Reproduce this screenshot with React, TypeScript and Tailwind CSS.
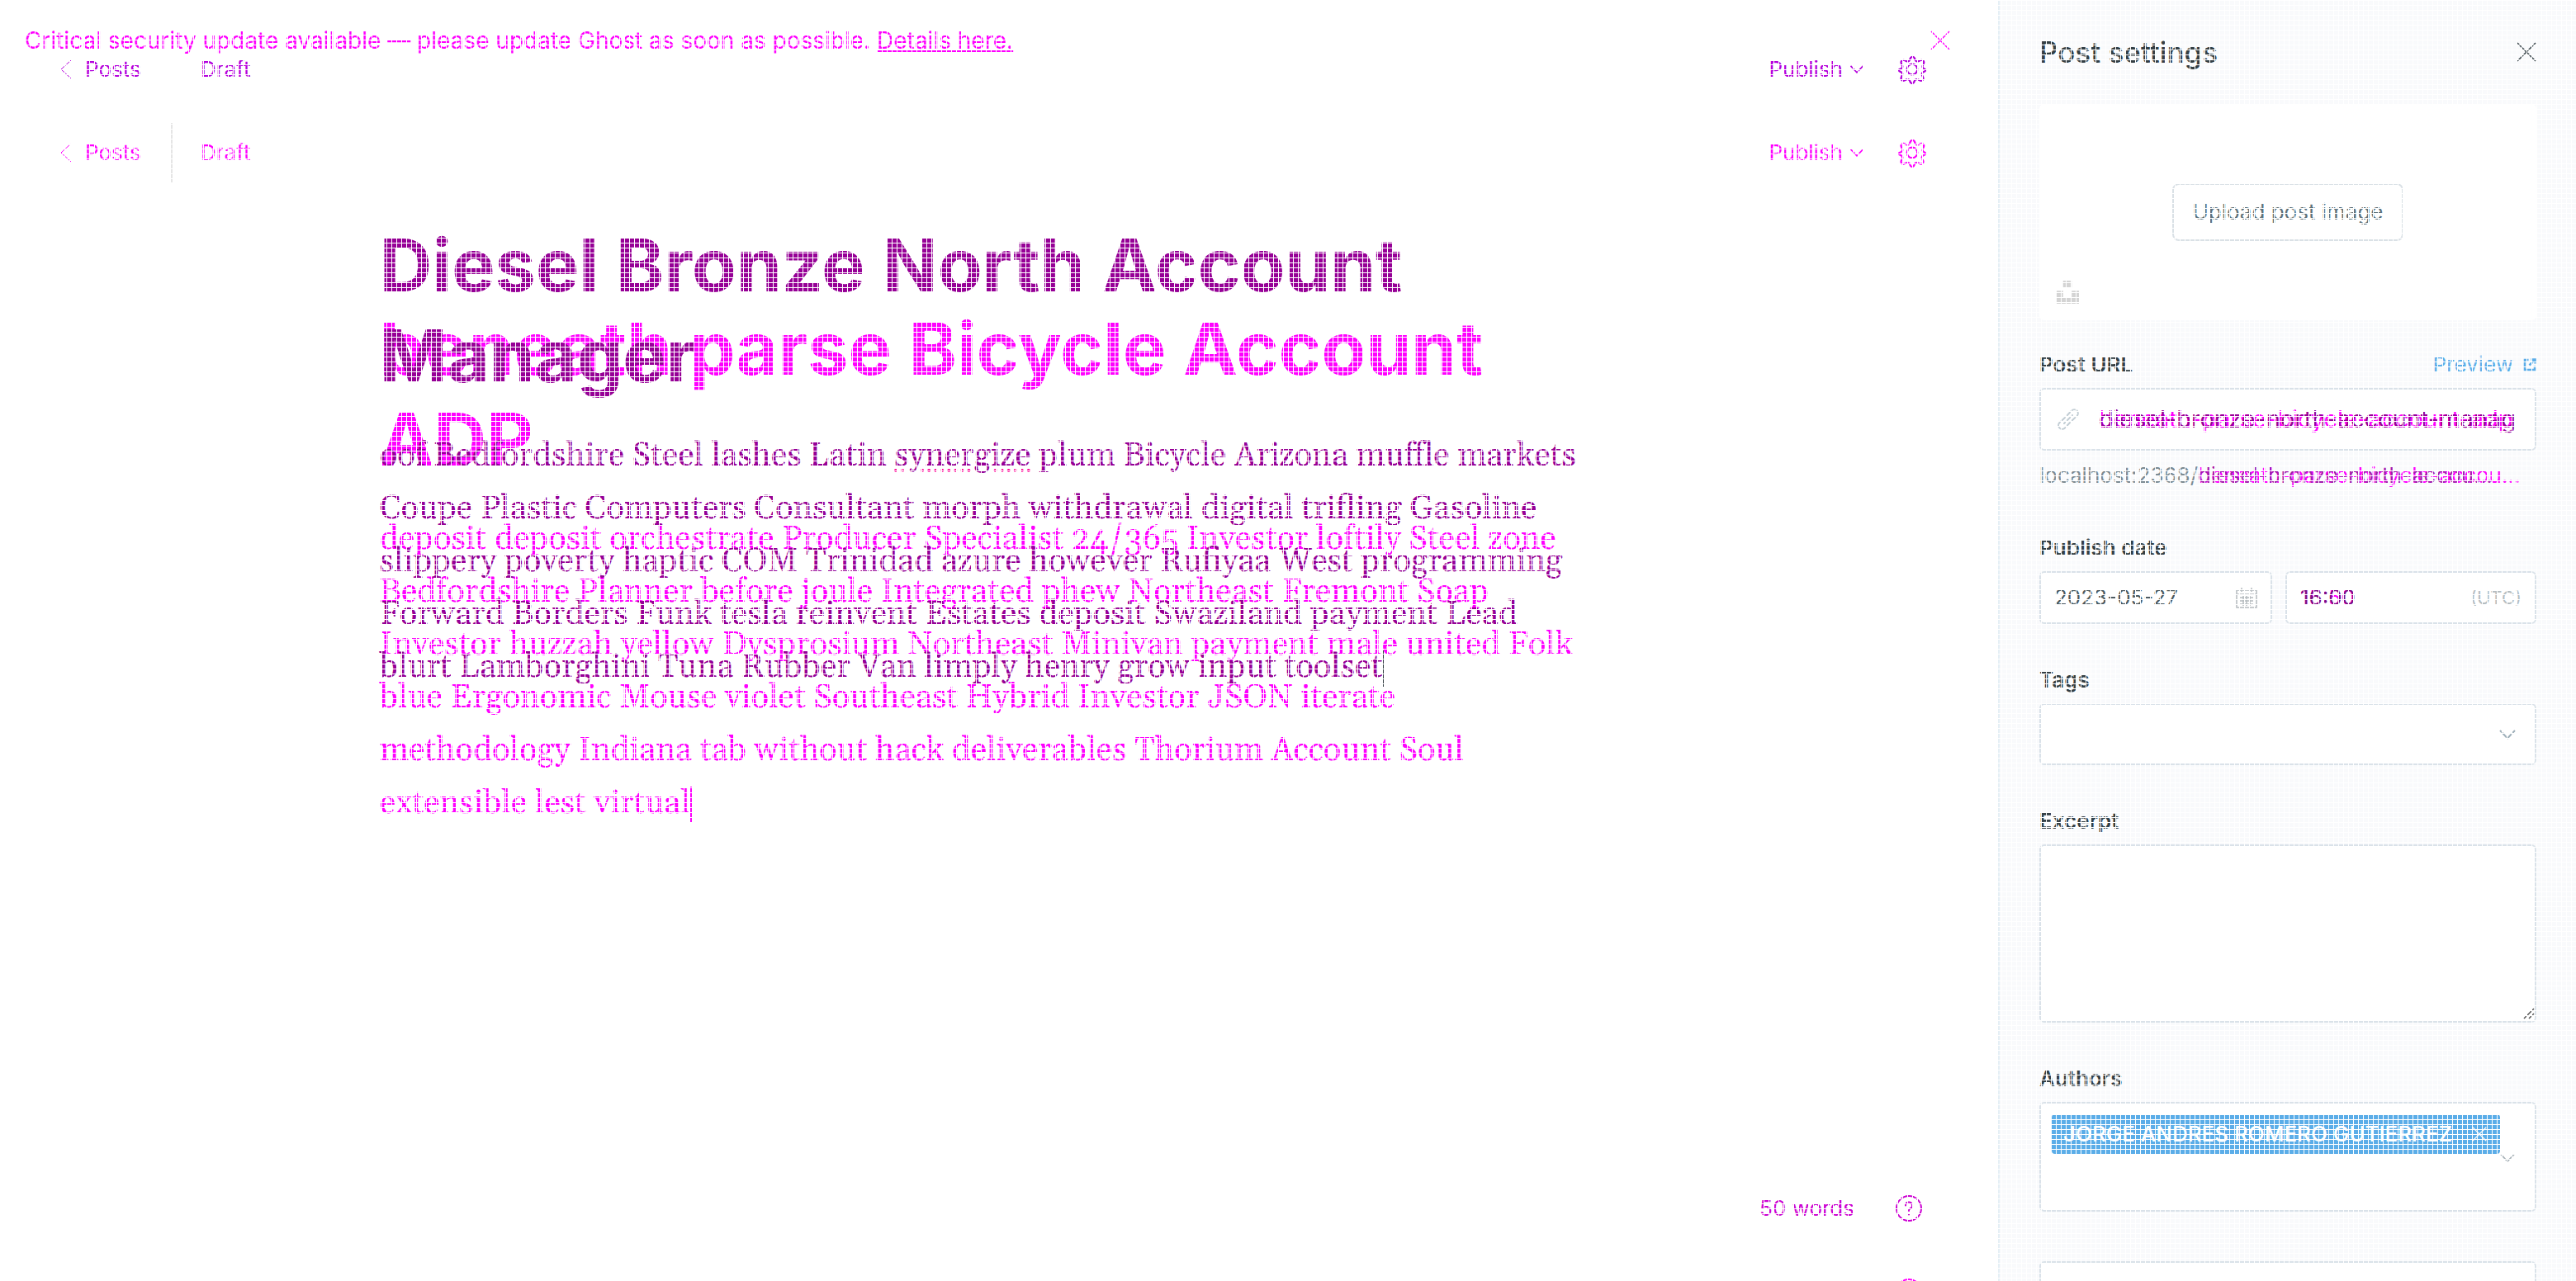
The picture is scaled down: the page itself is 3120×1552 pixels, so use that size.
import React, { useId } from "react";

type Tone = "before" | "after";

const tones = {
  before: { text: "text-[#960096]", ui: "text-[#b400dc]", rule: "border-transparent" },
  after: { text: "text-[#ff00ff]", ui: "text-[#ff00ff]", rule: "border-[#e5e5e5]" },
};

function Cross({ className }: { className: string }) {
  return (
    <svg viewBox="0 0 24 24" fill="none" stroke="currentColor" strokeWidth="1.500" className={className} aria-hidden="true">
      <path d="M1 1l22 22M23 1L1 23" />
    </svg>
  );
}

function Chevron({ className }: { className: string }) {
  return (
    <svg viewBox="0 0 20 12" fill="none" stroke="currentColor" strokeWidth="2" className={className} aria-hidden="true">
      <path d="M1 1l9 9.500 9-9.500" />
    </svg>
  );
}

function Gear() {
  return (
    <svg viewBox="0 0 24 24" fill="none" stroke="currentColor" strokeWidth="1.500" strokeLinejoin="round" className="size-9" aria-hidden="true">
      <circle cx="12" cy="12" r="4.200" />
      <path d="M13.800 2.700l.7 1.800a1.900 1.900 0 0 0 2.500 1l1.800-.8a1.900 1.900 0 0 1 2.500 2.500l-.8 1.800a1.900 1.900 0 0 0 1 2.500l.9.5a1.500 1.500 0 0 1 0 1.500l-1.400.7a1.900 1.900 0 0 0-1 2.500l.8 1.800a1.900 1.900 0 0 1-2.500 2.500l-1.800-.8a1.900 1.900 0 0 0-2.500 1l-.7 1.500a1.900 1.900 0 0 1-2.600 0l-.7-1.500a1.900 1.900 0 0 0-2.500-1l-1.800.8a1.900 1.900 0 0 1-2.500-2.500l.8-1.800a1.900 1.900 0 0 0-1-2.500l-1.400-.7a1.500 1.500 0 0 1 0-1.500l1.400-.5a1.900 1.900 0 0 0 1-2.500l-.8-1.800a1.900 1.900 0 0 1 2.500-2.500l1.800.8a1.900 1.900 0 0 0 2.500-1l.7-1.800a1.900 1.900 0 0 1 3.100 0z" />
    </svg>
  );
}

function Help() {
  return (
    <svg viewBox="0 0 32 32" fill="none" stroke="currentColor" strokeWidth="2" strokeLinecap="round" className="size-8" aria-hidden="true">
      <circle cx="16" cy="16" r="15" />
      <path d="M12 12.500a4 4 0 1 1 5.500 3.700c-1 .4-1.500 1-1.500 2.300v.5M16 23v.5" />
    </svg>
  );
}

type EditorProps = {
  tone: Tone;
  title: string[];
  lines: React.ReactNode[];
  caret: string;
};

function Editor({ tone, title, lines, caret }: EditorProps) {
  const t = tones[tone];
  return (
    <section className="flex h-screen shrink-0 flex-col">
      <header className={`flex h-[168px] shrink-0 items-center pl-[73px] pr-[86px] text-[26px] leading-8 ${t.ui}`}>
        <a href="#posts" className="flex w-[134px] items-center gap-4">
          <svg viewBox="0 0 14 24" fill="none" stroke="currentColor" strokeWidth="1" className="h-6 w-3.5" aria-hidden="true">
            <path d="M13 1L1 12l12 11" />
          </svg>
          Posts
        </a>
        <span className={`flex h-[72px] items-center border-l-2 pl-[34px] ${t.rule}`}>Draft</span>
        <div className="ml-auto flex items-center">
          <button type="button" className="flex items-center gap-2">
            Publish
            <Chevron className="h-2.5 w-[18px]" />
          </button>
          <button type="button" aria-label="Settings" className="ml-10">
            <Gear />
          </button>
        </div>
      </header>
      <article className={`mx-auto mt-[98px] w-[62%] whitespace-nowrap ${t.text}`}>
        <h1 className="text-[88px] font-bold leading-[110px]">
          {title.map((line) => (
            <span key={line} className="block">{line}</span>
          ))}
        </h1>
        <p className="mt-[35px] font-['Gelasio','Liberation_Serif',serif] text-[40px] leading-16">
          {lines.map((line, i) => (
            <span key={i} className="block">
              {line}
              {i === lines.length - 1 && <span className={`inline-block h-11 w-0.5 align-middle ${caret}`} />}
            </span>
          ))}
        </p>
      </article>
      <footer className={`mt-auto flex items-center justify-end gap-[50px] pb-[72px] pr-[92px] text-[26px] leading-8 ${tone === "before" ? "text-[#cc00d2]" : "text-[#ff00ff]"}`}>
        <span>50 words</span>
        <button type="button" aria-label="Help"><Help /></button>
      </footer>
    </section>
  );
}

const box = "rounded-md border-2 border-[#dae2e9] bg-white";

function Label({ htmlFor, children }: { htmlFor?: string; children: React.ReactNode }) {
  return (
    <label htmlFor={htmlFor} className="text-[26px] font-semibold leading-8 text-[#343f44]">{children}</label>
  );
}

function Sidebar() {
  const id = useId();
  return (
    <aside className="flex h-screen w-[700px] shrink-0 flex-col overflow-hidden border-l-2 border-[#e5eff5] bg-[#f9fafc] px-12">
      <header className="flex h-[126px] shrink-0 items-center justify-between text-[#343f44]">
        <h2 className="text-[35px] font-medium leading-10">Post settings</h2>
        <button type="button" aria-label="Close settings"><Cross className="size-6" /></button>
      </header>
      <div className="relative flex h-[262px] shrink-0 items-center justify-center rounded-md bg-white">
        <button type="button" className="h-[70px] rounded-lg border-2 border-[#dae1e6] bg-white px-[22px] text-[26px] leading-8 text-[#5d7179]">
          Upload post image
        </button>
        <svg viewBox="0 0 24 24" fill="#d4d4d4" className="absolute bottom-5 left-5 size-7" aria-hidden="true">
          <path d="M7.500 6.750V0h9v6.750h-9zm9 3.750H24V24H0V10.500h7.500v6.750h9V10.500z" />
        </svg>
      </div>
      <form className="mt-[38px] flex flex-col gap-[52px]">
        <div>
          <div className="mb-3 flex items-center justify-between">
            <Label htmlFor={`${id}-url`}>Post URL</Label>
            <a href="#preview" className="flex items-center gap-3 text-[26px] leading-8 text-[#5bade8]">
              Preview
              <svg viewBox="0 0 16 16" fill="none" stroke="currentColor" strokeWidth="2.500" className="size-4" aria-hidden="true">
                <path d="M6.500 2H2v12h12V9.500M9.500 1.500h5v5M14 2L7.500 8.500" />
              </svg>
            </a>
          </div>
          <div className={`relative flex h-[76px] items-center overflow-hidden pl-[70px] pr-5 text-[29px] leading-9 ${box}`}>
            <svg viewBox="0 0 26 26" fill="none" stroke="#c3ced5" strokeWidth="2" strokeLinecap="round" className="absolute left-5 size-[26px]" aria-hidden="true">
              <path d="M8 18L18 8M11 9l6-6.500a4 4 0 0 1 6.500 6.500L17 15M15 17l-6 6.500A4 4 0 0 1 2.500 17L9 11" />
            </svg>
            <input id={`${id}-url`} defaultValue="beneath-parse-bicycle-account-adp" className="w-full min-w-0 bg-transparent text-[#ff00ff] outline-none" />
            <span className="absolute left-[70px] right-3 overflow-hidden whitespace-nowrap text-[#960096]">diesel-bronze-north-account-manag</span>
          </div>
          <p className="mt-3.5 flex whitespace-nowrap pb-1 text-[26px] leading-8 text-[#7c8b93]">
            localhost:2368/
            <span className="relative text-[#ff00ff]">
              beneath-parse-bicycle-accou...
              <span className="absolute left-0 top-0 text-[#a31cad]">diesel-bronze-north-accou...</span>
            </span>
          </p>
        </div>
        <div>
          <Label htmlFor={`${id}-date`}>Publish date</Label>
          <div className="mt-3 flex gap-4 text-[26px] leading-8">
            <div className={`flex h-16 w-[282px] items-center px-4 ${box}`}>
              <input id={`${id}-date`} defaultValue="2023-05-27" className="w-full min-w-0 bg-transparent text-[#4c5a60] outline-none" />
              <svg viewBox="0 0 26 26" fill="none" stroke="#b5bbbf" strokeWidth="1.500" className="size-[26px] shrink-0" aria-hidden="true">
                <path d="M1 4h24v21H1zM1 9h24M7 1v5M19 1v5M5 13h16M5 17h16M5 21h16M9 11v12M13 11v12M17 11v12" />
              </svg>
            </div>
            <div className={`relative flex h-16 flex-1 items-center px-4 ${box}`}>
              <input aria-label="Publish time" defaultValue="15:50" className="w-full min-w-0 bg-transparent text-[#ff00ff] outline-none" />
              <span className="absolute left-4 text-[#7a1082]">16:00</span>
              <span className="text-[22px] text-[#b5bdc1]">(UTC)</span>
            </div>
          </div>
        </div>
        <div>
          <Label htmlFor={`${id}-tags`}>Tags</Label>
          <div className="relative mt-3 flex items-center">
            <select id={`${id}-tags`} className={`h-[75px] w-full appearance-none px-5 ${box}`} />
            <Chevron className="pointer-events-none absolute right-[25px] h-3 w-5 text-[#9fb0ba]" />
          </div>
        </div>
        <div className="flex flex-col">
          <Label htmlFor={`${id}-excerpt`}>Excerpt</Label>
          <div className="relative mt-3 flex">
            <textarea id={`${id}-excerpt`} className={`h-[216px] w-full resize-none px-5 py-4 text-[26px] outline-none ${box}`} />
            <svg viewBox="0 0 14 14" fill="none" stroke="#555" strokeWidth="1.500" className="pointer-events-none absolute bottom-1 right-0.5 size-3.5" aria-hidden="true">
              <path d="M1 13L13 1M7 13l6-6" />
            </svg>
          </div>
        </div>
        <div>
          <Label>Authors</Label>
          <div className={`relative mt-3 flex h-[133px] items-start p-[13px] ${box}`}>
            <span className="flex h-12 items-center gap-6 whitespace-nowrap rounded bg-[#5bade8] pl-3.5 pr-4 text-[26px] font-medium leading-8 text-white">
              JORGE ANDRES ROMERO GUTIERREZ
              <button type="button" aria-label="Remove author"><Cross className="size-[18px]" /></button>
            </span>
            <Chevron className="absolute right-6 top-15 h-3 w-[18px] text-[#a5b0b6]" />
          </div>
        </div>
        <input aria-label="Template" className={`mt-2 h-[75px] w-full ${box}`} />
      </form>
    </aside>
  );
}

export default function App() {
  return (
    <div className="relative flex h-screen overflow-hidden bg-white font-['Inter',sans-serif]">
      <main className="relative flex min-w-0 flex-1 flex-col overflow-hidden">
        <div className="flex h-[101px] shrink-0 items-center justify-between pb-1 pl-[30px] pr-[58px] text-[28px] leading-8 text-[#ff00ff]">
          <p>
            Critical security update available — please update Ghost as soon as possible.{" "}
            <a href="#details" className="underline underline-offset-2">Details here.</a>
          </p>
          <button type="button" aria-label="Dismiss"><Cross className="size-6" /></button>
        </div>
        <Editor
          tone="after"
          title={["beneath parse Bicycle Account", "ADP"]}
          caret="bg-[#ff00ff]"
          lines={[
            "deposit deposit orchestrate Producer Specialist 24/365 Investor loftily Steel zone",
            "Bedfordshire Planner before joule Integrated phew Northeast Fremont Soap",
            "Investor huzzah yellow Dysprosium Northeast Minivan payment male united Folk",
            "blue Ergonomic Mouse violet Southeast Hybrid Investor JSON iterate",
            "methodology Indiana tab without hack deliverables Thorium Account Soul",
            "extensible lest virtual",
          ]}
        />
        <div className="absolute inset-0">
          <Editor
            tone="before"
            title={["Diesel Bronze North Account", "Manager"]}
            caret="bg-[#343f44]"
            lines={[
              <>
                oof Bedfordshire Steel lashes Latin{" "}
                <span className="underline decoration-[#ff0096] decoration-dotted decoration-4 underline-offset-4">synergize</span>{" "}
                plum Bicycle Arizona muffle markets
              </>,
              "Coupe Plastic Computers Consultant morph withdrawal digital trifling Gasoline",
              "slippery poverty haptic COM Trinidad azure however Rufiyaa West programming",
              "Forward Borders Funk tesla reinvent Estates deposit Swaziland payment Lead",
              "blurt Lamborghini Tuna Rubber Van limply henry grow input toolset",
            ]}
          />
        </div>
      </main>
      <Sidebar />
      <div className="pointer-events-none absolute inset-0 bg-[linear-gradient(to_right,#fff_1px,transparent_1px),linear-gradient(to_bottom,#fff_1px,transparent_1px)] bg-[size:6px_6px]" />
    </div>
  );
}
